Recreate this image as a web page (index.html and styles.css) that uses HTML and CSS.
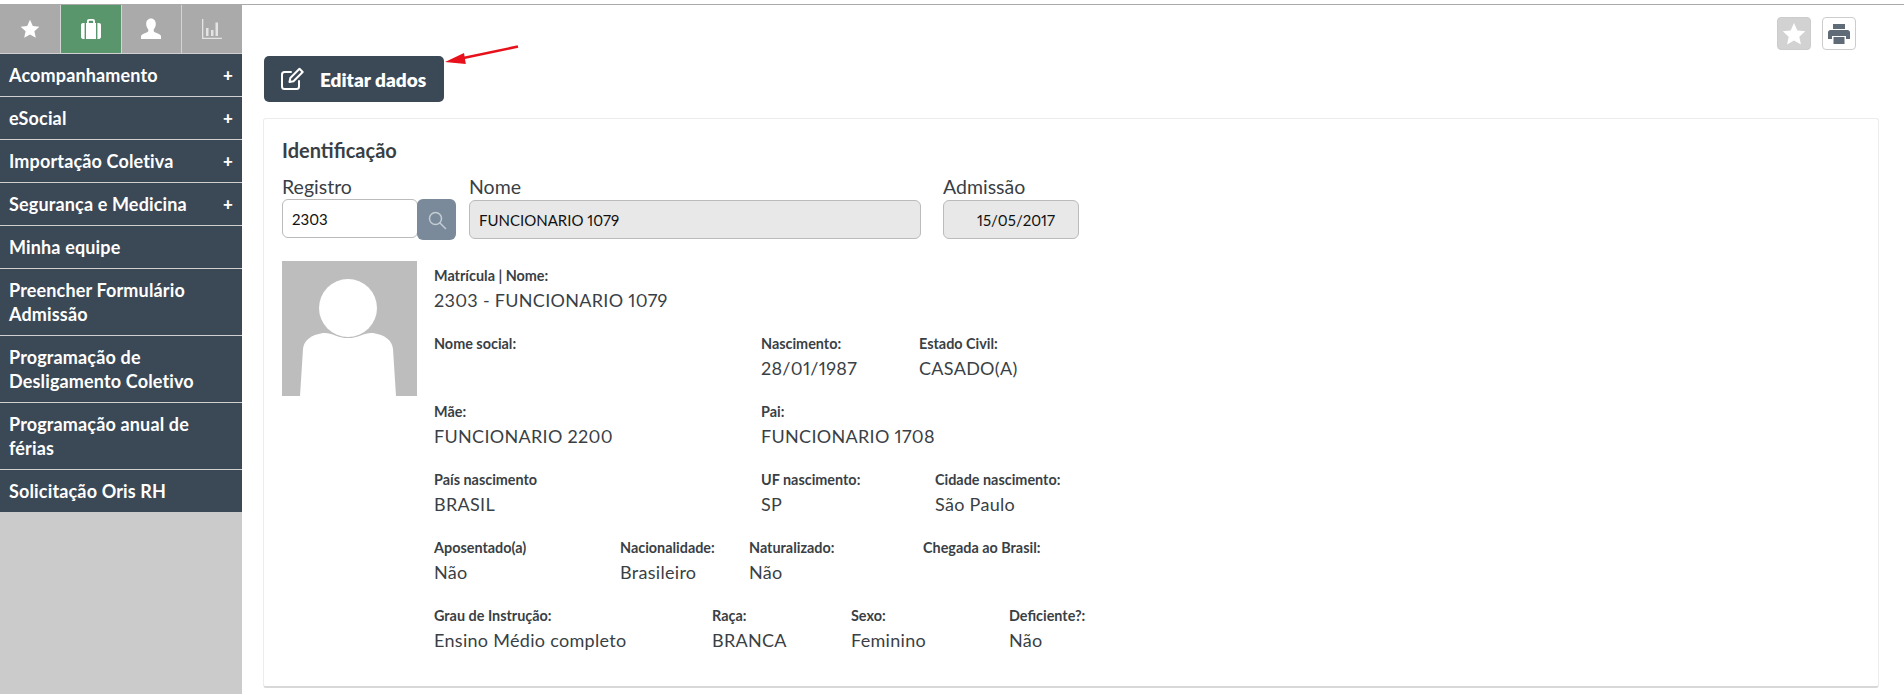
FILE: index.html
```html
<!DOCTYPE html>
<html lang="pt-BR">
<head>
<meta charset="utf-8">
<title>Identificação</title>
<link rel="stylesheet" href="styles.css">
</head>
<body>
<div class="topgap"></div>
<div class="shell">
  <aside class="sidebar">
    <nav class="tabs">
      <a class="tab"><svg class="ti" width="20" height="20" viewBox="0 0 20 20"><path d="M10 .8l2.8 6.2 6.6.7-5 4.500 1.400 6.600-5.800-3.400-5.800 3.400 1.400-6.600-5-4.500 6.600-.7z"/></svg></a>
      <a class="tab tab-active"><svg class="ti" width="22" height="22" viewBox="0 0 22 22"><path d="M7 5V3.200C7 1.900 7.900 1 9.200 1h3.600C14.100 1 15 1.900 15 3.200V5h-1.800V3.400c0-.4-.3-.7-.7-.7h-3c-.4 0-.7.3-.7.7V5z"/><path d="M6 5h10v16H6zM1 7.200C1 5.900 1.900 5 3 5h1.600v16H3c-1.100 0-2-.9-2-2.200zM17.400 5H19c1.100 0 2 .9 2 2.200v11.600C21 20.100 20.100 21 19 21h-1.600z"/></svg></a>
      <a class="tab"><svg class="ti" width="22" height="22" viewBox="0 0 22 22"><path d="M11 .5c3 0 4.800 2.300 4.800 5.300 0 2.400-.9 4.400-2.100 5.600v1.700c0 .8 1 1.300 3 2 2.300.8 4.300 1.700 4.300 3.500V21H1v-2.400c0-1.800 2-2.700 4.300-3.500 2-.7 3-1.200 3-2v-1.700C7.100 10.200 6.200 8.200 6.200 5.800 6.200 2.800 8 .5 11 .5z"/></svg></a>
      <a class="tab"><svg class="ti ti-dim" width="20" height="20" viewBox="0 0 20 20"><path d="M0 0h1.300v18.700H20V20H0zM4 9h2.500v8H4zM9 11h2.500v6H9zM13.500 3.500H16V17h-2.500z"/></svg></a>
    </nav>
    <ul class="menu">
      <li class="menu-item"><span>Acompanhamento</span><b class="plus">+</b></li>
      <li class="menu-item"><span>eSocial</span><b class="plus">+</b></li>
      <li class="menu-item"><span>Importação Coletiva</span><b class="plus">+</b></li>
      <li class="menu-item"><span>Segurança e Medicina</span><b class="plus">+</b></li>
      <li class="menu-item"><span>Minha equipe</span></li>
      <li class="menu-item"><span>Preencher Formulário<br>Admissão</span></li>
      <li class="menu-item"><span>Programação de<br>Desligamento Coletivo</span></li>
      <li class="menu-item"><span>Programação anual de<br>férias</span></li>
      <li class="menu-item"><span>Solicitação Oris RH</span></li>
    </ul>
  </aside>
  <main class="main">
    <div class="tools">
      <button class="tool tool-fav"><svg width="24" height="24" viewBox="0 0 20 20" fill="#fff"><path d="M10 .8l2.800 6.200 6.600.7-5 4.500 1.400 6.600-5.800-3.400-5.800 3.400 1.400-6.600-5-4.500 6.600-.7z"/></svg></button>
      <button class="tool"><svg width="22" height="22" viewBox="0 0 22 22" fill="#5f6b76"><path d="M5 1h12v5H5zM2.500 7h17C20.900 7 22 8.100 22 9.500V16h-4v-3H4v3H0V9.500C0 8.100 1.100 7 2.500 7zM5.500 14h11v7h-11z"/></svg></button>
    </div>
    <button class="edit">
      <svg class="edit-icon" width="24" height="24" viewBox="0 0 24 24" fill="none" stroke="#fff" stroke-width="2" stroke-linejoin="round" stroke-linecap="round"><path d="M11 5H4.500C3.100 5 2 6.100 2 7.500v12C2 20.900 3.100 22 4.500 22h12c1.400 0 2.500-1.100 2.500-2.500V14"/><path d="M9.500 15l.8-4L19.500 1.800 22.700 5 13.500 14.200z"/></svg>
      <span>Editar dados</span>
    </button>
    <svg class="arrow" width="74" height="24" viewBox="0 0 74 24"><path d="M73 1.500L16 13.500" stroke="#e8101a" stroke-width="2.500" fill="none"/><path d="M0 17L19 8l1.800 11z" fill="#e8101a"/></svg>

    <section class="card">
      <h2 class="card-title">Identificação</h2>
      <div class="fields">
        <div class="field field-reg">
          <label class="field-label">Registro</label>
          <div class="input-group">
            <div class="input input-reg">2303</div>
            <button class="search"><svg width="20" height="20" viewBox="0 0 20 20" fill="none" stroke="#c4ccd4" stroke-width="1.500"><circle cx="8.500" cy="8.500" r="6"/><path d="M13 13l5.500 5.500" stroke-linecap="round"/></svg></button>
          </div>
        </div>
        <div class="field field-name">
          <label class="field-label">Nome</label>
          <div class="input input-off">FUNCIONARIO 1079</div>
        </div>
        <div class="field field-adm">
          <label class="field-label">Admissão</label>
          <div class="input input-off input-date">15/05/2017</div>
        </div>
      </div>
      <div class="profile">
        <svg class="photo" width="135" height="135" viewBox="0 0 135 135"><rect width="135" height="135" fill="#bdbdbd"/><circle cx="66" cy="47" r="29" fill="#fff"/><path d="M18 135l3-47c1-9 8-14 20-16 8-1 14 5 25 5s17-6 25-5c12 2 19 7 20 16l3 47z" fill="#fff"/></svg>
        <div class="data">
          <div class="row r1"><div class="item"><h4>Matrícula | Nome:</h4><p>2303 - FUNCIONARIO 1079</p></div></div>
          <div class="row r2">
            <div class="item"><h4>Nome social:</h4></div>
            <div class="item"><h4>Nascimento:</h4><p>28/01/1987</p></div>
            <div class="item"><h4>Estado Civil:</h4><p>CASADO(A)</p></div>
          </div>
          <div class="row r3">
            <div class="item"><h4>Mãe:</h4><p>FUNCIONARIO 2200</p></div>
            <div class="item"><h4>Pai:</h4><p>FUNCIONARIO 1708</p></div>
          </div>
          <div class="row r4">
            <div class="item"><h4>País nascimento</h4><p>BRASIL</p></div>
            <div class="item"><h4>UF nascimento:</h4><p>SP</p></div>
            <div class="item"><h4>Cidade nascimento:</h4><p>São Paulo</p></div>
          </div>
          <div class="row r5">
            <div class="item"><h4>Aposentado(a)</h4><p>Não</p></div>
            <div class="item"><h4>Nacionalidade:</h4><p>Brasileiro</p></div>
            <div class="item"><h4>Naturalizado:</h4><p>Não</p></div>
            <div class="item"><h4>Chegada ao Brasil:</h4></div>
          </div>
          <div class="row r6">
            <div class="item"><h4>Grau de Instrução:</h4><p>Ensino Médio completo</p></div>
            <div class="item"><h4>Raça:</h4><p>BRANCA</p></div>
            <div class="item"><h4>Sexo:</h4><p>Feminino</p></div>
            <div class="item"><h4>Deficiente?:</h4><p>Não</p></div>
          </div>
        </div>
      </div>
    </section>
  </main>
</div>
</body>
</html>
```
FILE: styles.css
```css
* { box-sizing: border-box; }
html, body { margin: 0; height: 100%; overflow: hidden; }
body { background: #fff; color: #3a3f45; font-family: "Lato", "Noto Sans", sans-serif; font-variant-numeric: proportional-nums; display: flex; flex-direction: column; }
.topgap { height: 5px; flex: none; border-bottom: 1px solid #aaa; }
.shell { flex: 1; display: flex; min-height: 0; }

.sidebar { width: 242px; flex: none; background: #cbcbcb; }
.tabs { display: flex; height: 49px; background: #aaa; }
.tab { flex: 1; display: flex; align-items: center; justify-content: center; border-left: 1px solid #d4d4d4; border-bottom: 1px solid #d0d0d0; }
.tab:first-child { border-left: 0; }
.tab-active { background: #5a966b; }
.ti { fill: #fff; }
.ti-dim { fill: #e4e4e4; }
.menu { list-style: none; margin: 0; padding: 0; }
.menu-item { display: flex; justify-content: space-between; align-items: center; padding: 9px; background: #3b4856; color: #fff; font-size: 18px; font-weight: 700; letter-spacing: .15px; line-height: 24px; border-bottom: 1px solid #d0d0d0; }
.menu-item:last-child { border-bottom: 0; }
.plus { font-size: 17px; line-height: 24px; }

.main { flex: 1; min-width: 0; padding: 0 25px 0 22px; position: relative; }
.tools { display: flex; justify-content: flex-end; gap: 11px; padding: 12px 23px 0 0; height: 51px; }
.tool { width: 34px; height: 33px; padding: 0; display: flex; align-items: center; justify-content: center; background: #fff; border: 1px solid #ccc; border-radius: 4px; }
.tool-fav { background: #d2d2d2; }
.edit { display: flex; align-items: center; width: 180px; height: 46px; padding: 0 0 0 16px; gap: 16px; background: #3b4856; border: 0; border-radius: 5px; color: #fff; font: 800 19px "Lato", sans-serif; }
.edit-icon { flex: none; }
.arrow { position: absolute; left: 203px; top: 40px; }

.card { margin-top: 16px; margin-left: -1px; height: 570px; padding: 19px 18px 0 18px; background: #fff; border: 1px solid #ececec; border-bottom: 2px solid #d8d8d8; border-radius: 3px; }
.card-title { margin: 0; font-size: 20px; line-height: 24px; font-weight: 700; color: #3a3f45; }
.fields { display: flex; margin-top: 13px; }
.field-label { display: block; font-size: 19.500px; line-height: 24px; color: #3a3f45; }
.field-reg { width: 187px; }
.field-name { width: 474px; }
.field-adm { width: 136px; }
.input-group { display: flex; }
.input { height: 39px; padding: 0 9px; display: flex; align-items: center; font-size: 15px; color: #111; border: 1px solid #bbb; border-radius: 6px; background: #fff; }
.input-reg { width: 136px; }
.input-off { background: #e8e8e8; margin-top: 1px; }
.field-name .input-off { width: 452px; }
.field-adm .input-off { width: 136px; }
.input-date { padding-left: 33px; }
.search { width: 39px; height: 41px; margin-left: -1px; padding: 0; display: flex; align-items: center; justify-content: center; background: #7a8a9a; border: 0; border-radius: 6px; }

.profile { display: flex; gap: 17px; margin-top: 21px; }
.photo { display: block; flex: none; }
.data { flex: 1; padding-top: 5px; }
.row { display: grid; height: 68px; }
.r1 { grid-template-columns: 1fr; }
.r2 { grid-template-columns: 327px 158px 1fr; }
.r3 { grid-template-columns: 327px 1fr; }
.r4 { grid-template-columns: 327px 174px 1fr; }
.r5 { grid-template-columns: 186px 129px 174px 1fr; }
.r6 { grid-template-columns: 278px 139px 158px 1fr; }
.item h4 { margin: 0; font-size: 14.400px; line-height: 20px; font-weight: 700; color: #3a3f45; }
.item p { margin: 2px 0 0; font-size: 18px; letter-spacing: .3px; line-height: 24px; color: #3a3f45; }
```
